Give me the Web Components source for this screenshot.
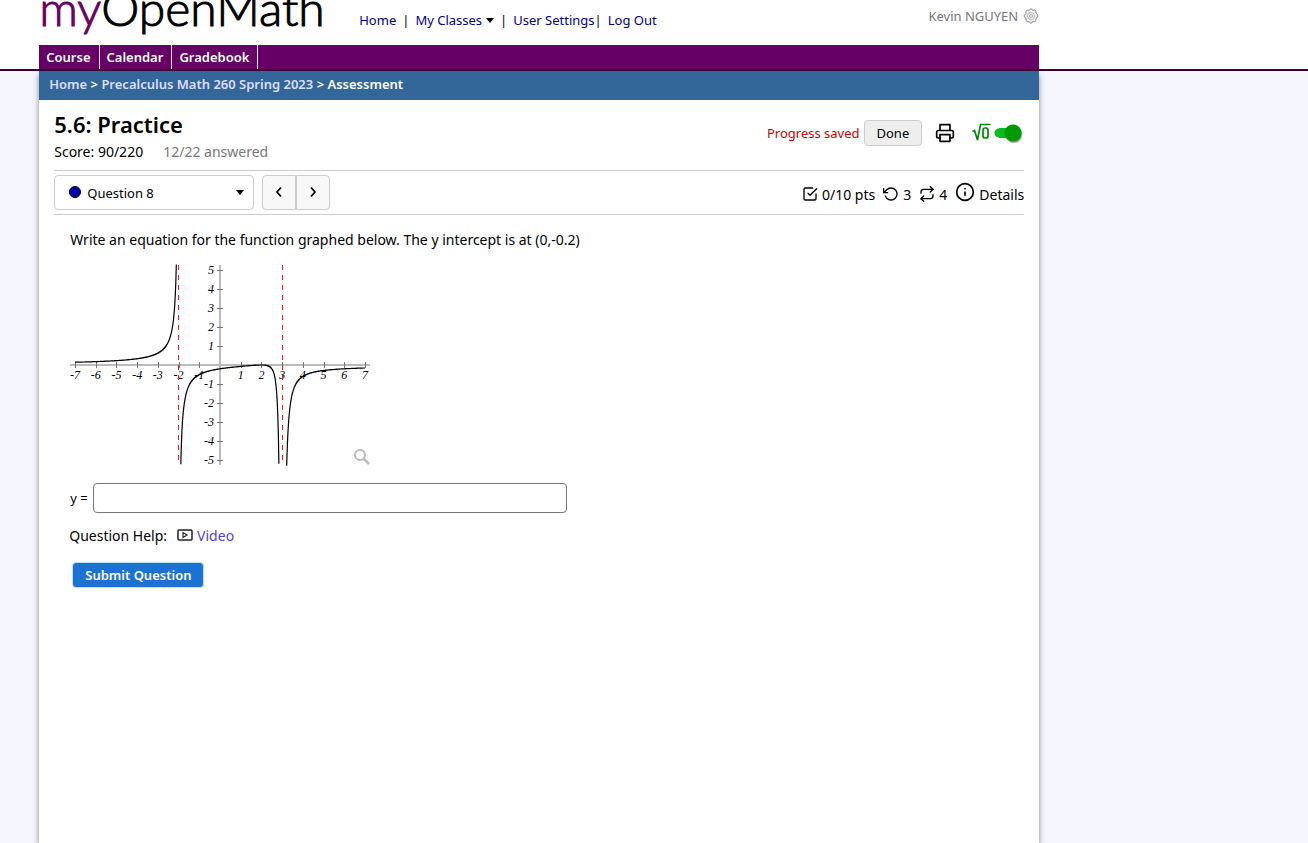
<!DOCTYPE html>
<html lang="en">
<head>
<meta charset="utf-8">
<title>5.6: Practice</title>
<style>
html, body { margin: 0; min-height: 100vh; }
body { font: 14px/20px "Noto Sans", sans-serif; color: #000; background: #f6f6ff; }
mom-app { min-height: 100vh; }
</style>
</head>
<body>
<mom-app></mom-app>
<script>
function define(name, html, setup) {
  const template = document.createElement('template');
  template.innerHTML = html;
  customElements.define(name, class extends HTMLElement {
    constructor() {
      super();
      this.attachShadow({ mode: 'open' }).append(template.content.cloneNode(true));
      if (setup) setup(this.shadowRoot);
    }
  });
}

define('mom-header', `
<style>
:host { display: block; background: #fff; border-bottom: 2px solid #303; font-size: 13px; }
.inner { max-width: 1000px; margin-left: 3%; }
.top { display: flex; height: 45px; }
.logo { width: 320px; font: 300 48px/60px Lato, sans-serif; margin-top: -22px; white-space: nowrap; -webkit-text-stroke: 1px #000; }
.logo span { color: #606; -webkit-text-stroke-color: #606; }
nav { display: flex; align-items: center; }
.links { gap: 6px; height: 40px; flex: 1; }
.tight { display: flex; }
a { text-decoration: none; color: #008; }
.caret { width: 0; border: 4px solid transparent; border-top: 5px solid #000; border-bottom: 0; display: inline-block; margin: 2px 0 2px 4px; }
.user { display: flex; gap: 5px; align-items: center; height: 32px; color: #777; }
.tabs { background: #606; height: 24px; font-weight: 600; align-items: stretch; }
.tabs a { color: #fff; padding: 0 8px 0 7px; line-height: 24px; border-right: 1px solid #fff; }
</style>
<div class="inner">
 <div class="top">
  <div class="logo"><span>my</span>OpenMath</div>
  <nav class="links"><a href="#">Home</a><span>|</span><a href="#">My Classes<i class="caret"></i></a><span>|</span><span class="tight"><a href="#">User Settings</a><span>|</span></span><a href="#">Log Out</a></nav>
  <div class="user"><span>Kevin NGUYEN</span>
   <svg width="16" height="16" viewBox="0 0 16 16" fill="#eee" stroke="#888" aria-hidden="true"><path d="M6.300 2.400Q8-1 9.700 2.400 13.300 1 12.900 5 17 8 12.900 10.500 13.600 14.500 9.700 13.600 8 17 6.300 13.600 2.400 14.500 3.100 10.500-1 8 3.100 5.500 2.400 1 6.300 2.400Z"/><circle cx="8" cy="8" r="3.500" stroke="#bbb"/><circle cx="8" cy="8" r="1.500" stroke="#aaa" fill="#fff"/></svg>
  </div>
 </div>
 <nav class="tabs"><a href="#">Course</a><a href="#">Calendar</a><a href="#">Gradebook</a></nav>
</div>`);

define('mom-breadcrumb', `
<style>
:host { display: block; background: #369; color: #fff; padding: 3px 10px 6px; font-size: 13px; font-weight: 600; }
a { color: #ddf; text-decoration: none; }
</style>
<a href="#">Home</a> &gt; <a href="#">Precalculus Math 260 Spring 2023</a> &gt; Assessment`);

define('mom-titlebar', `
<style>
:host { display: flex; justify-content: space-between; border-bottom: 1px solid #ccc; padding: 6px 0 8px; }
h1 { font-size: 22px; line-height: 28px; font-weight: 600; margin: 0; }
p { margin: 4px 0 0; display: flex; gap: 20px; }
.grey { color: #777; }
.actions { display: flex; align-items: center; height: 45px; font-size: 13px; }
.saved { color: #c00; margin-right: 4px; }
button { font: inherit; height: 26px; padding: 0 12px; border: 1px solid #ccc; border-radius: 4px; background: #eee; }
.print { border: 0; background: none; padding: 0; margin: 0 17px 0 13px; display: grid; place-items: center; }
label { display: flex; align-items: center; gap: 3px; }
input { appearance: none; margin: 0; width: 30px; height: 20px; background: radial-gradient(circle at 19px 10px, #090 8px, transparent 9px), radial-gradient(circle at 20px 12px, #0006 7px, transparent 9px), linear-gradient(#0b2, #0b2) 5px 50% / 14px 10px no-repeat, radial-gradient(circle at 5px 10px, #0b2 4px, transparent 5px); }
</style>
<div><h1>5.6: Practice</h1><p><span>Score: 90/220</span><span class="grey">12/22 answered</span></p></div>
<div class="actions"><span class="saved">Progress saved</span><button>Done</button>
<button class="print" aria-label="Print"><svg width="20" height="20" viewBox="0 0 24 24" fill="none" stroke="#000" stroke-width="2" stroke-linecap="round" stroke-linejoin="round"><path d="M6 9V2h12v7M6 18H4a2 2 0 0 1-2-2v-5a2 2 0 0 1 2-2h16a2 2 0 0 1 2 2v5a2 2 0 0 1-2 2h-2"/><path d="M6 14h12v8H6z"/></svg></button>
<label><svg width="19" height="20" viewBox="0 0 19 20" fill="none" stroke="#080" aria-hidden="true"><path d="M.5 8.500 2.500 7.500 5.500 17 8.500 1.500H18.500" stroke-width="1.700"/><path d="M11 7Q11 5 13 5H14Q16 5 16 7V13Q16 15 14 15H13Q11 15 11 13Z" stroke-width="1.700"/></svg><input type="checkbox" checked aria-label="Equation editor"></label></div>`);

define('mom-questionbar', `
<style>
:host { display: flex; align-items: center; gap: 8px; border-bottom: 1px solid #ccc; padding: 4px 0; }
.pick { display: grid; width: 200px; height: 35px; align-items: center; }
.pick > * { grid-area: 1 / 1; }
select { appearance: none; font: inherit; font-size: 13px; color: #000; width: 100%; height: 100%; padding: 0 32px; background: #fff; border: 1px solid #ccc; border-radius: 4px; }
.mark { z-index: 1; pointer-events: none; margin: 0 10px 1px 15px; display: flex; justify-content: space-between; align-items: center; }
.dot { width: 10px; height: 10px; border: 1px solid #000; border-radius: 50%; background: #00a; }
.caret { border: 4px solid transparent; border-top: 5px solid #000; border-bottom: 0; }
.pager { display: flex; }
.pager button { width: 34px; height: 35px; padding: 0; border: 1px solid #ccc; background: #f8f8f8; border-radius: 4px 0 0 4px; display: grid; place-items: center; }
.pager button + button { border-radius: 0 4px 4px 0; }
.pager svg { stroke-linecap: butt; stroke-linejoin: miter; margin-bottom: 1px; }
.stats { display: flex; gap: 8px; margin-left: auto; padding-top: 4px; align-items: center; }
.stats span { display: flex; gap: 4px; align-items: center; }
.stats svg { margin-bottom: 2px; }
.stats .info { margin-bottom: 6px; }
svg { fill: none; stroke: #000; stroke-width: 2; stroke-linecap: round; stroke-linejoin: round; }
</style>
<div class="pick"><select aria-label="Question"><option>Question 8</option></select><div class="mark"><i class="dot"></i><i class="caret"></i></div></div>
<div class="pager"><button aria-label="Previous question"><svg width="16" height="16" viewBox="0 0 16 16"><path d="m10 3.500-4 4.500 4 4.500" stroke-width="1.700"/></svg></button><button aria-label="Next question"><svg width="16" height="16" viewBox="0 0 16 16"><path d="m6 3.500 4 4.500-4 4.500" stroke-width="1.700"/></svg></button></div>
<div class="stats">
<span><svg width="16" height="16" viewBox="0 0 24 24"><path d="m9 11 3 3L22 4"/><path d="M21 12v7a2 2 0 0 1-2 2H5a2 2 0 0 1-2-2V5a2 2 0 0 1 2-2h11"/></svg>0/10 pts</span>
<span><svg width="16" height="16" viewBox="0 0 24 24"><path d="M1 4v6h6"/><path d="M3.510 15a9 9 0 1 0 2.130-9.360L1 10"/></svg>3</span>
<span><svg width="16" height="16" viewBox="0 0 24 24"><path d="m17 1 4 4-4 4"/><path d="M3 11V9a4 4 0 0 1 4-4h14M7 23l-4-4 4-4"/><path d="M21 13v2a4 4 0 0 1-4 4H3"/></svg>4</span>
<span><svg class="info" width="20" height="20" viewBox="0 0 24 24"><circle cx="12" cy="12" r="10"/><path d="M12 16v-4M12 8h.01"/></svg>Details</span>
</div>`);

define('mom-graph', `
<style>
:host { display: block; position: relative; width: 300px; height: 200px; }
svg { display: block; fill: none; overflow: visible; }
text { font: italic 12px "Liberation Serif", serif; fill: #000; text-anchor: middle; }
button { position: absolute; right: 0; bottom: 0; width: 16px; height: 16px; padding: 0; border: 0; background: none; }
</style>
<svg class="plot" width="300" height="200" viewBox="0 0 300 200" role="img" aria-label="Graph with vertical asymptotes at -2 and 3"></svg>
<button aria-label="Enlarge graph"><svg width="16" height="16" viewBox="0 0 16 16" stroke="#bbb" stroke-width="2"><circle cx="6" cy="6" r="5"/><path d="m10 10 5 5" stroke-width="2.500"/></svg></button>`,
root => {
  const X = x => 150 + x * 290 / 14, Y = y => 100 - y * 19;
  const f = x => -0.9 * (x - 2) ** 2 / ((x + 2) * (x - 3) ** 2);
  let labels = '', ticks = '';
  for (let i = -7; i <= 7; i++) if (i) {
    ticks += `M${Math.round(X(i)) + .5} 97v6`;
    labels += `<text x="${X(i)}" y="114">${i}</text>`;
    if (Math.abs(i) < 6) {
      ticks += `M147 ${Y(i) + .5}h6`;
      labels += `<text x="${i < 0 ? 139 : 141}" y="${Y(i) + 4}">${i}</text>`;
    }
  }
  let out = `<path stroke="#bbb" stroke-width="2" d="M0 100H300M150 0V200"/><path stroke="#777" d="${ticks}"/>` + labels;
  out += `<path stroke="#e02020" stroke-dasharray="5 5" d="M108.500 0V200M212.500 0V200"/>`;
  for (const [a, b] of [[-7, -2.005], [-1.995, 2.990], [3.010, 7]]) {
    let d = '';
    for (let x = a; x <= b; x += 0.002) {
      const y = Y(f(x));
      if (y >= -1 && y <= 201) d += (d ? 'L' : 'M') + X(x).toFixed(1) + ' ' + y.toFixed(1);
    }
    out += `<path stroke="#000" stroke-width="1.200" d="${d}"/>`;
  }
  root.querySelector('.plot').innerHTML = out;
});

define('mom-question', `
<style>
:host { display: block; padding: 15px 16px; }
p { margin: 0; }
mom-graph { margin: 15px 0 18px; }
.answer { display: flex; align-items: center; gap: 5px; }
.answer span { font-size: 13px; }
input { box-sizing: border-box; width: 474px; max-width: 100%; height: 30px; border: 1px solid #777; border-radius: 4px; font: inherit; }
.help { margin: 13px 0 16px -1px; display: flex; align-items: center; }
.help svg { margin: 0 4px 2px 10px; }
a { color: #54c; text-decoration: none; }
.submit { margin-left: 2px; font: inherit; font-size: 13px; font-weight: 600; color: #fff; background: #1a73d2; border: 1px solid #c5dcf5; border-radius: 4px; height: 26px; padding: 0 12px; }
</style>
<p>Write an equation for the function graphed below. The y intercept is at (0,-0.2)</p>
<mom-graph></mom-graph>
<label class="answer"><span>y =</span><input type="text"></label>
<p class="help">Question Help:<svg width="16" height="12" viewBox="0 0 16 12" fill="none" stroke="#222" stroke-width="1.500" aria-hidden="true"><rect x="1" y="1" width="14" height="10" rx="1"/><path d="M6 3.500v5L10 6z" stroke-width="1.200"/></svg><a href="#">Video</a></p>
<button class="submit">Submit Question</button>`);

define('mom-app', `
<style>
:host { display: flex; flex-direction: column; }
main { flex: 1; width: 1000px; max-width: 97%; margin-left: 3%; background: #fff; box-shadow: 0 4px 6px #888; clip-path: inset(0 -12px); }
section { padding: 4px 15px; }
</style>
<mom-header></mom-header>
<main>
 <mom-breadcrumb></mom-breadcrumb>
 <section><mom-titlebar></mom-titlebar><mom-questionbar></mom-questionbar><mom-question></mom-question></section>
</main>`);
</script>
</body>
</html>
